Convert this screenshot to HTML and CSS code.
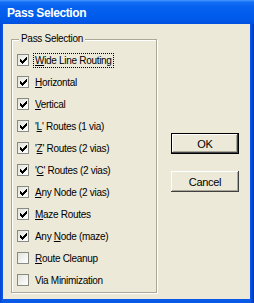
FILE: index.html
```html
<!DOCTYPE html>
<html lang="en">
<head>
    <meta charset="UTF-8">
    <meta name="viewport" content="width=device-width, initial-scale=1.0">
    <title>Pass Selection</title>
    <link rel="stylesheet" href="styles.css">
</head>
<body>

    <div class="window">
        <div class="titlebar">
            <span class="title">Pass Selection</span>
        </div>

        <div class="client">
            <div class="group">
                <span class="legend">Pass Selection</span>

                <label class="row">
                    <span class="box checked"></span>
                    <span class="text focus"><u>W</u>ide Line Routing</span>
                </label>
                <label class="row">
                    <span class="box checked"></span>
                    <span class="text"><u>H</u>orizontal</span>
                </label>
                <label class="row">
                    <span class="box checked"></span>
                    <span class="text"><u>V</u>ertical</span>
                </label>
                <label class="row">
                    <span class="box checked"></span>
                    <span class="text">'<u>L</u>' Routes (1 via)</span>
                </label>
                <label class="row">
                    <span class="box checked"></span>
                    <span class="text">'<u>Z</u>' Routes (2 vias)</span>
                </label>
                <label class="row">
                    <span class="box checked"></span>
                    <span class="text">'<u>C</u>' Routes (2 vias)</span>
                </label>
                <label class="row">
                    <span class="box checked"></span>
                    <span class="text"><u>A</u>ny Node (2 vias)</span>
                </label>
                <label class="row">
                    <span class="box checked"></span>
                    <span class="text"><u>M</u>aze Routes</span>
                </label>
                <label class="row">
                    <span class="box checked"></span>
                    <span class="text">Any <u>N</u>ode (maze)</span>
                </label>
                <label class="row">
                    <span class="box"></span>
                    <span class="text"><u>R</u>oute Cleanup</span>
                </label>
                <label class="row">
                    <span class="box"></span>
                    <span class="text">Via Minimization</span>
                </label>
            </div>

            <div class="buttons">
                <button class="btn default">OK</button>
                <button class="btn">Cancel</button>
            </div>
        </div>
    </div>

</body>
</html>
```

FILE: styles.css
```css
* {
    margin: 0;
    padding: 0;
    box-sizing: border-box;
}

body {
    font-family: 'Liberation Sans', Arial, sans-serif;
    background-color: #0058ee;
    width: 254px;
    height: 303px;
    overflow: hidden;
}

.window {
    width: 254px;
    height: 303px;
    display: flex;
    flex-direction: column;
    background: linear-gradient(to right, #0843d0 0, #0a5ae8 3px, #0a5ae8 250px, #0850e0 251px, #0036c0 254px);
}

.titlebar {
    height: 24px;
    padding-left: 7px;
    display: flex;
    align-items: center;
    background: linear-gradient(to bottom, #4a98ff 0, #1470f5 2px, #0862f0 6px, #005ded 14px, #0058e8 20px, #0050e0 24px);
}

.title {
    color: #fff;
    font-weight: bold;
    font-size: 12px;
    letter-spacing: -0.4px;
    margin-top: 2px;
}

.client {
    flex: 1;
    margin: 0 4px 4px 3px;
    background-color: #ece9d8;
    display: flex;
    padding: 15px 8px 6px 8px;
}

.group {
    position: relative;
    width: 146px;
    border: 1px solid #aca899;
    box-shadow: inset 1px 1px 0 #fff, 1px 1px 0 #fff;
    padding: 9px 0 0 5px;
    display: flex;
    flex-direction: column;
}

.legend {
    position: absolute;
    top: -7px;
    left: 7px;
    padding: 0 2px;
    background-color: #ece9d8;
    font-size: 10px;
    letter-spacing: -0.3px;
    color: #000;
    line-height: 12px;
}

.row {
    height: 22px;
    display: flex;
    align-items: center;
    font-size: 10px;
    letter-spacing: -0.3px;
    color: #000;
}

.box {
    width: 12px;
    height: 12px;
    border: 1px solid #8a8a84;
    background: linear-gradient(135deg, #e4e4dc 0, #fff 100%);
    margin-right: 5px;
    flex-shrink: 0;
    position: relative;
}

/* classic 7x7 check mark */
.box.checked::after {
    content: "";
    position: absolute;
    left: 2px;
    top: 2px;
    width: 7px;
    height: 7px;
    background: linear-gradient(#000, #000) 0 2px / 1px 3px no-repeat,
                linear-gradient(#000, #000) 1px 3px / 1px 3px no-repeat,
                linear-gradient(#000, #000) 2px 4px / 1px 3px no-repeat,
                linear-gradient(#000, #000) 3px 3px / 1px 3px no-repeat,
                linear-gradient(#000, #000) 4px 2px / 1px 3px no-repeat,
                linear-gradient(#000, #000) 5px 1px / 1px 3px no-repeat,
                linear-gradient(#000, #000) 6px 0 / 1px 3px no-repeat;
}

.text {
    line-height: 13px;
    padding: 0 1px;
}

.text.focus {
    outline: 1px dotted #000;
    outline-offset: 0;
}

.buttons {
    display: flex;
    flex-direction: column;
    gap: 17px;
    margin-left: 14px;
    padding-top: 94px;
}

.btn {
    width: 68px;
    height: 21px;
    font-family: 'Liberation Sans', Arial, sans-serif;
    font-size: 11px;
    letter-spacing: -0.3px;
    color: #000;
    background-color: #ece9d8;
    border: none;
    box-shadow: inset -1px -1px 0 #404040, inset 1px 1px 0 #fff, inset -2px -2px 0 #aca899;
}

.btn.default {
    border: 1px solid #000;
}
```
